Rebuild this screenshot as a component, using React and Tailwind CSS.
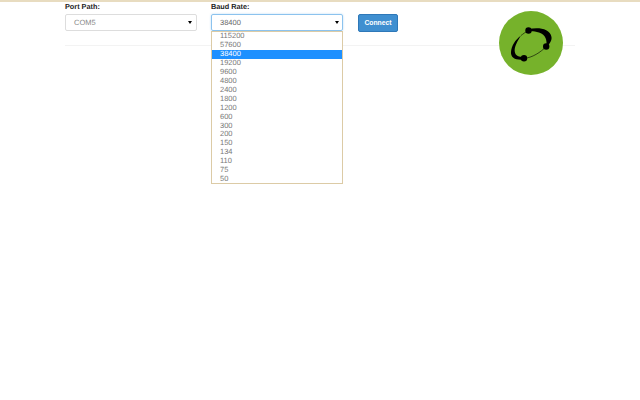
const BAUD_RATES = ['115200', '57600', '38400', '19200', '9600', '4800', '2400', '1800', '1200', '600', '300', '200', '150', '134', '110', '75', '50'];

const Caret = () => <span className="w-0 h-0 border-x-[2px] border-x-transparent border-t-[3px] border-t-black" />;

const App = () => {
  return (
    <div className="relative w-[640px] h-[400px] bg-white overflow-hidden border-t-[2px] border-[#e8dcc0] font-['Liberation_Sans',Arial,sans-serif] [text-rendering:geometricPrecision]">
      <div className="mx-[65px] w-[510px] h-[44px] border-b border-[#f3f3f3] flex items-start gap-[14px]">
        <div className="w-[132px]">
          <label className="block h-[12px] text-[7.3px] leading-[9px] font-bold text-[#222]">Port Path:</label>
          <div className="h-[17px] flex items-center justify-between pl-[8px] pr-[4px] border border-[#ddd] rounded-[2px] text-[7.5px] text-[#888]">
            COM5
            <Caret />
          </div>
        </div>
        <div className="relative w-[132px]">
          <label className="block h-[12px] text-[7.3px] leading-[9px] font-bold text-[#222]">Baud Rate:</label>
          <div className="h-[17px] flex items-center justify-between pl-[8px] pr-[3px] border border-[#8cc3ee] rounded-[2px] text-[7.5px] text-[#666] shadow-[0_0_2px_rgba(102,175,233,0.5)]">
            38400
            <Caret />
          </div>
          <ul className="absolute left-0 top-[29px] w-[132px] h-[153px] bg-white border border-[#dccba6] text-[7.5px] leading-[8.95px] text-[#777]">
            {BAUD_RATES.map((rate) => (
              <li key={rate} className={rate === '38400' ? 'pl-[8px] bg-[#1e90ff] text-white' : 'pl-[8px]'}>
                {rate}
              </li>
            ))}
          </ul>
        </div>
        <button className="mt-[12px] ml-[1px] w-[40px] h-[18px] bg-[#3f8fd0] border border-[#2e78b8] rounded-[2px] text-[6.8px] font-bold text-white">
          Connect
        </button>
      </div>
      <svg className="absolute left-[499px] top-[9px]" width="64" height="64" viewBox="0 0 64 64">
        <circle cx="32" cy="32" r="32" fill="#76b22b" />
        <path d="M29.5 19.5C26.5 21 24 23 22 24.5M25 47.3C33 47 42 41 47.2 35.5" fill="none" stroke="#000" strokeWidth="0.6" />
        <path d="M25 48.5C17 49.5 11.5 47 12 41C12.5 35 16 29 22 24.5C18.5 30 15 36 15.8 41C16.5 45 20 46 25 46Z" fill="#000" />
        <path d="M29.5 18.3C38 16 51 17 52.5 26C53 30 50.5 33 47.5 35.5C48 29 47 24 40 21.5C36 20.3 32 20 29.5 20.5Z" fill="#000" />
        <circle cx="29.5" cy="19.5" r="3.2" fill="#000" />
        <circle cx="47.2" cy="35.5" r="3.2" fill="#000" />
        <circle cx="25" cy="47.3" r="3.2" fill="#000" />
      </svg>
    </div>
  );
};

export default App;
